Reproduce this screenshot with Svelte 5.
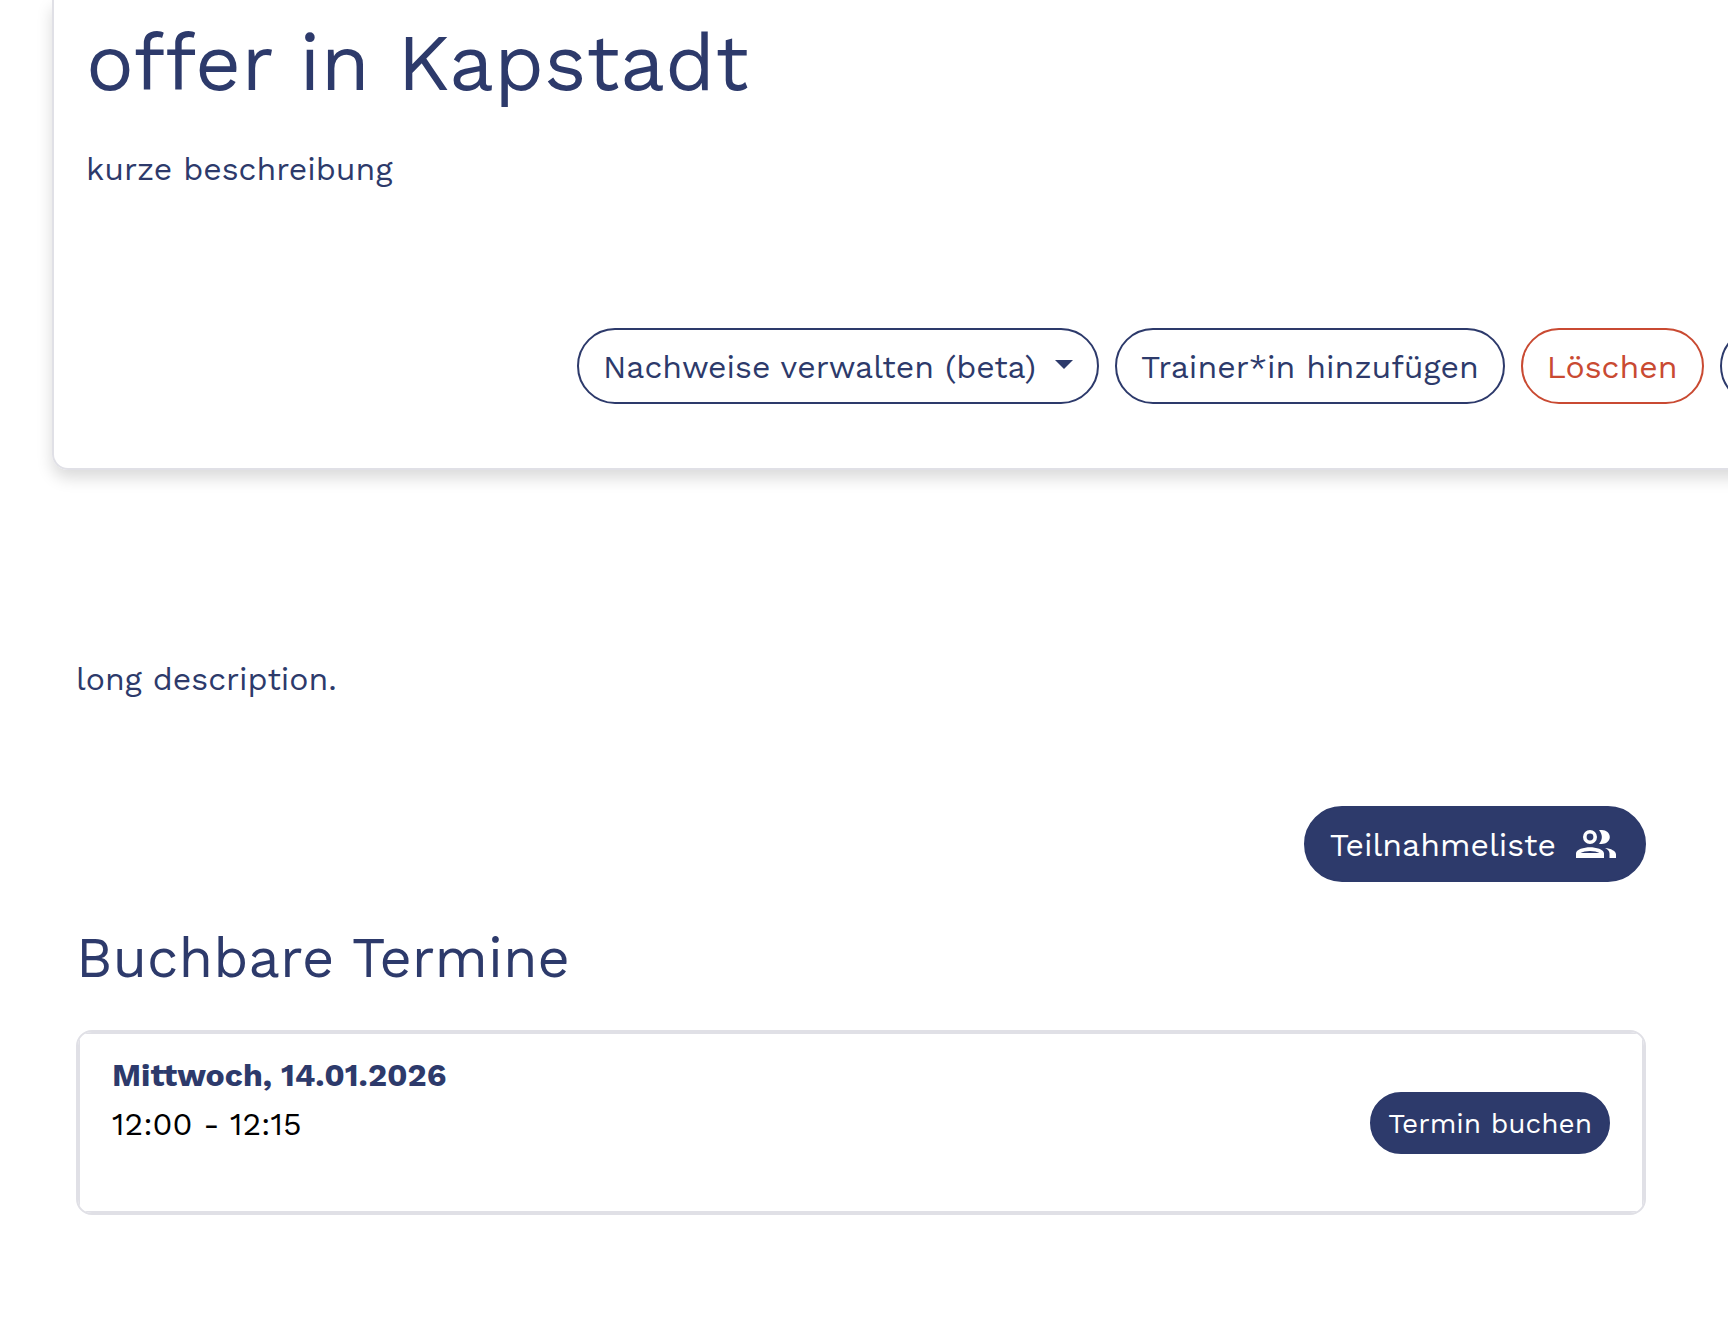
<script>
  const slots = [{ date: 'Mittwoch, 14.01.2026', time: '12:00 - 12:15' }];
</script>

<main>
  <header class="hero">
    <h1>offer in Kapstadt</h1>
    <p class="short">kurze beschreibung</p>
    <div class="actions">
      <button class="btn dropdown">
        Nachweise verwalten (beta)
        <svg class="caret" viewBox="0 0 18 9" aria-hidden="true"><path d="M0 0h18L9 9z" /></svg>
      </button>
      <button class="btn">Trainer*in hinzufügen</button>
      <button class="btn danger">Löschen</button>
      <button class="btn more" aria-label="Bearbeiten"></button>
    </div>
  </header>

  <section class="content">
    <p>long description.</p>
    <div class="toolbar">
      <button class="btn filled">
        Teilnahmeliste
        <svg class="people" viewBox="0 0 40 28" aria-hidden="true">
          <path
            fill-rule="evenodd"
            d="M14 0a7 7 0 1 1 0 14a7 7 0 0 1 0-14zM14 3.6a3.4 3.4 0 1 0 0 6.8a3.4 3.4 0 0 0 0-6.8zM0 28v-4.500C0 19.500 8 17.300 14 17.300S28 19.500 28 23.500V28zM4.500 23h19C21.500 21.600 17.500 20.900 14 20.900S6.500 21.600 4.500 23z"
          />
          <path d="M23 .3C28.500-1 33.800 2 33.800 7S28.500 15 23 13.700C26.800 9.800 26.800 4.200 23 .3z" />
          <path d="M29 17.900c6 .5 11 3 11 6.600V28h-6.500v-4.500C33.500 21 31.600 19.200 29 17.900z" />
        </svg>
      </button>
    </div>
    <h2>Buchbare Termine</h2>
    {#each slots as slot}
      <article class="slot">
        <div class="slot-body">
          <div class="when">
            <p class="date">{slot.date}</p>
            <p class="time">{slot.time}</p>
          </div>
          <button class="btn filled small">Termin buchen</button>
        </div>
      </article>
    {/each}
  </section>
</main>

<style>
  :global(body) {
    background: #fff;
  }

  main {
    --navy: #2d3a6b;
    --line: #e0e0e6;
    overflow: hidden;
    color: var(--navy);
    font-family: 'Work Sans', Inter, sans-serif;
    font-size: 32px;
    line-height: 48px;
  }

  h1,
  h2,
  p {
    margin: 0;
    font-weight: 400;
  }

  .hero {
    box-sizing: border-box;
    margin: 0 -64px 0 52px;
    padding: 15px 32px 64px;
    border: 2px solid var(--line);
    border-top: 0;
    border-radius: 0 0 16px 16px;
    box-shadow: 0 8px 16px rgba(0, 0, 0, 0.15);
  }

  h1 {
    font-size: 80px;
    line-height: 96px;
  }

  .short {
    margin-top: 34px;
  }

  .actions {
    display: flex;
    gap: 16px;
    margin-top: 135px;
    padding-left: 491px;
  }

  .btn {
    box-sizing: border-box;
    display: flex;
    flex: none;
    align-items: center;
    justify-content: center;
    gap: 20px;
    min-height: 76px;
    padding: 2px 24px 0;
    border: 2px solid currentColor;
    border-radius: 38px;
    background: #fff;
    color: var(--navy);
    font: inherit;
    white-space: nowrap;
    cursor: pointer;
  }

  .dropdown {
    gap: 19px;
  }

  .danger {
    color: #c94a32;
  }

  .more {
    min-width: 120px;
  }

  .caret {
    width: 18px;
    height: 9px;
    margin-bottom: 6px;
    fill: currentColor;
  }

  .content {
    padding: 185px 82px 120px 76px;
  }

  .toolbar {
    display: flex;
    justify-content: flex-end;
    margin-top: 103px;
  }

  .filled {
    padding-right: 28px;
    border-color: var(--navy);
    background: var(--navy);
    color: #fff;
  }

  .people {
    width: 40px;
    height: 28px;
    margin-bottom: 2px;
    fill: currentColor;
  }

  h2 {
    margin-top: 40px;
    font-size: 56px;
    line-height: 72px;
  }

  .slot {
    overflow: hidden;
    margin-top: 36px;
    border: 2px solid var(--line);
    border-radius: 16px;
  }

  .slot-body {
    display: flex;
    align-items: center;
    justify-content: space-between;
    padding: 16px 32px;
    border: 2px solid var(--line);
  }

  .when {
    padding: 1px 0 47px;
  }

  .date {
    font-weight: 700;
  }

  .time {
    margin-top: 1px;
    color: #000;
  }

  .small {
    min-height: 62px;
    padding: 2px 16px 0;
    font-size: 28px;
  }
</style>
